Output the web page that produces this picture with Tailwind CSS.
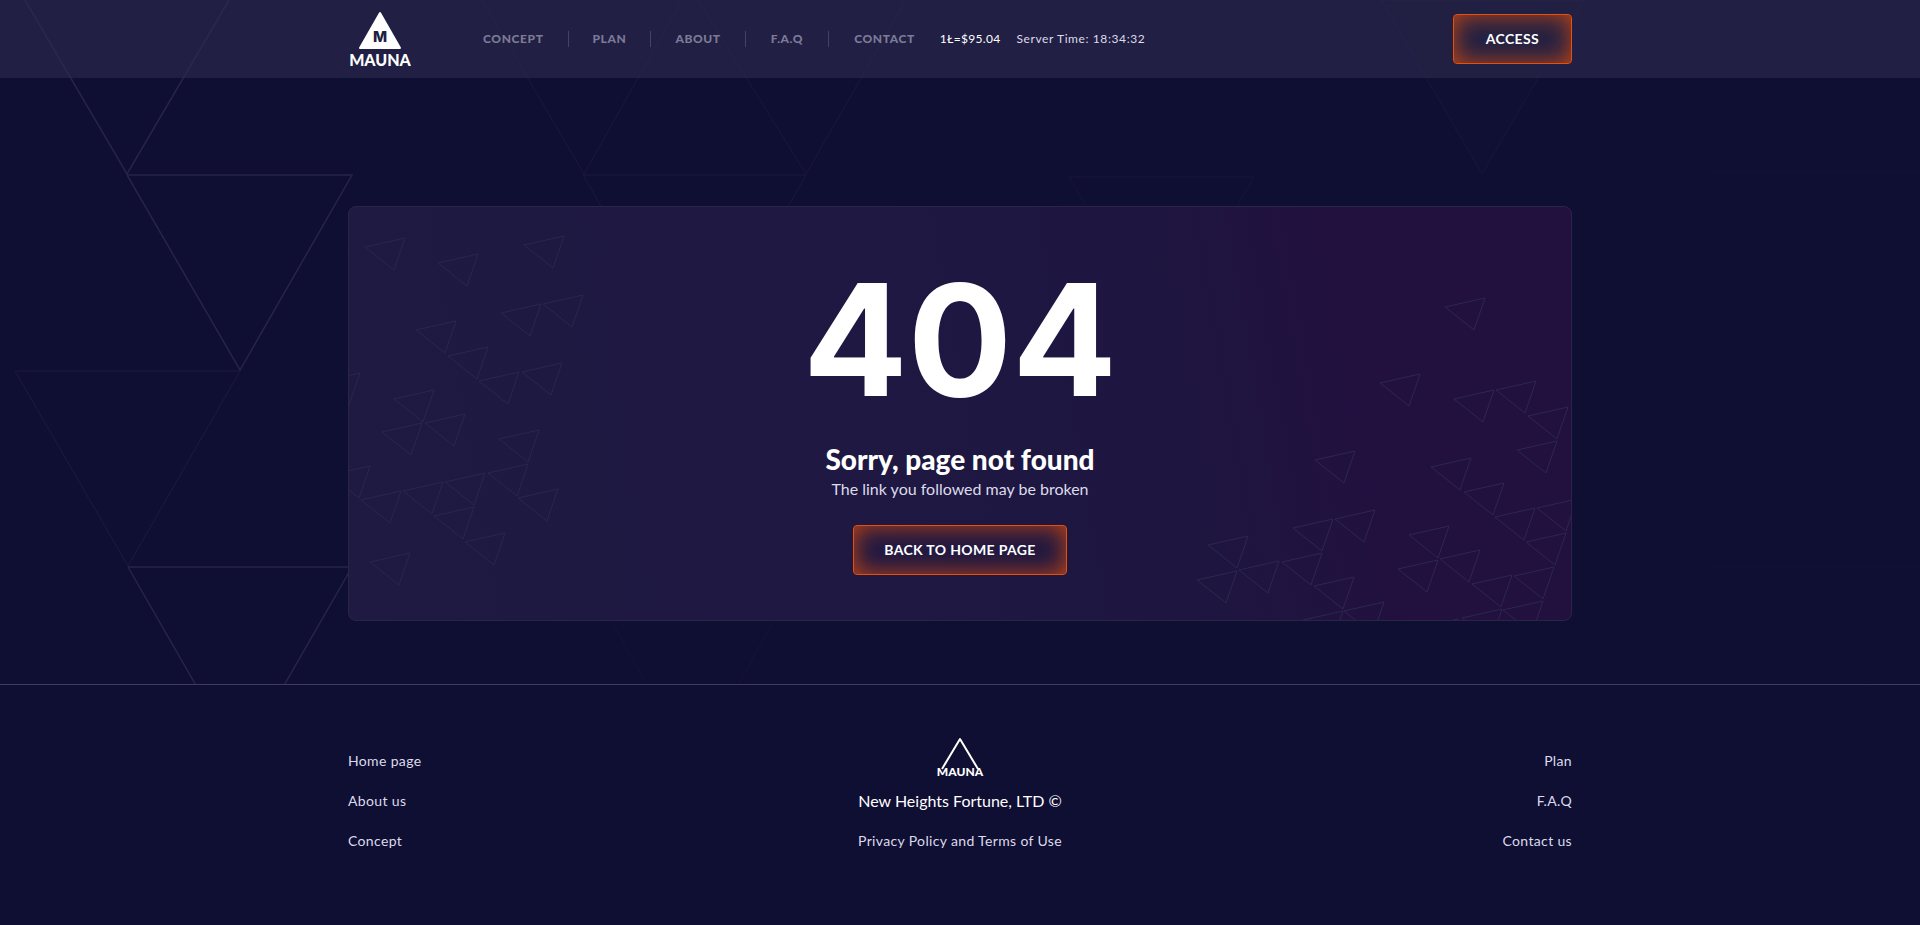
<!DOCTYPE html>
<html lang="en">
  <head>
    <meta charset="UTF-8" />
    <meta name="viewport" content="width=device-width, initial-scale=1.0" />
    <title>Mauna - 404</title>
    <script src="https://cdn.jsdelivr.net/npm/@tailwindcss/browser@4"></script>
  </head>
  <body class="min-h-screen bg-[#0f0e33] font-['Lato',sans-serif] text-white">
    <div class="relative overflow-hidden border-b border-[#3f3b5f]">
      <!-- Background triangles -->
      <svg class="pointer-events-none absolute top-0 left-0" width="1920" height="685" fill="none" aria-hidden="true">
        <path d="M25 0L127 174L229 0M127 175H352L240 370L127 175M128 567H352L240 762L128 567" stroke="#292349" stroke-width="1.5" />
        <path d="M15 371H240L128 566L15 371" stroke="#1f1a42" />
        <path d="M482 0L584 174L682 0M583 175H806L695 370L583 175M698 0L806 174L906 0" stroke="#1c183e" />
        <path d="M1086 206L1069 177H1254L1237 206" stroke="#181439" />
        <path d="M1381 0L1482 174L1584 0Z" fill="#100f34" stroke="#1a173c" />
        <path d="M612 622L647 685M773 622L738 685" stroke="#171439" />
        <path d="M1878 78L1920 151M1920 172H1710L1823 367L1920 199M1920 567H1709L1776 685M1868 685L1920 594" stroke="#131137" />
      </svg>

      <header class="relative h-[78px] bg-[#2d2b4f]/60">
        <div class="mx-auto flex h-full max-w-[1224px] items-center justify-between">
          <div class="flex items-center">
            <a href="#" class="mr-[72px]">
              <svg width="63" height="58" viewBox="0 0 63 58">
                <path d="M32 3L52 38H12Z" fill="#fff" stroke="#fff" stroke-width="2" stroke-linejoin="round" />
                <text x="32" y="32" text-anchor="middle" class="fill-[#211f44] font-['Inter',sans-serif] text-[15px] font-extrabold">M</text>
                <text x="32" y="56" text-anchor="middle" class="fill-white text-base font-black">MAUNA</text>
              </svg>
            </a>
            <nav class="flex items-center text-xs font-black tracking-wider text-[#7c7a97]">
              <a href="#" class="pr-6">CONCEPT</a>
              <a href="#" class="border-l border-[#454365] px-6">PLAN</a>
              <a href="#" class="border-l border-[#454365] px-6">ABOUT</a>
              <a href="#" class="border-l border-[#454365] px-[25px]">F.A.Q</a>
              <a href="#" class="border-l border-[#454365] px-[25px]">CONTACT</a>
            </nav>
            <span class="mr-4 text-xs tracking-wide">1Ł=$95.04</span>
            <span class="text-xs tracking-wider text-[#dcdbea]">Server Time: 18:34:32</span>
          </div>
          <button class="h-[50px] rounded border border-[#e8500a] px-8 text-sm font-bold tracking-wide shadow-[inset_0_0_25px_#e8500acc]">ACCESS</button>
        </div>
      </header>

      <!-- 404 card -->
      <main class="relative mx-auto mt-32 mb-[63px] max-w-[1224px] overflow-hidden rounded-lg border border-[#2a2548] bg-linear-[80deg,#1f1a42,#1e1842_40%,#1e1640_66%,#22103f_82%]">
        <svg class="pointer-events-none absolute -top-px -left-px" width="240" height="416" fill="none" stroke="#2c264b" aria-hidden="true">
          <path d="M17 41l40-9-11 32zM90 57l40-9-11 32zM176 39l40-9-11 32zM153 107l40-9-11 32zM195 98l40-9-11 32zM68 124l40-9-11 32zM100 150l40-9-11 32zM131 175l40-9-11 32z" />
          <path d="M174 166l40-9-11 32zM-28 176l40-9-11 32zM46 193l40-9-11 32zM34 226l40-9-11 32zM77 217l40-9-11 32zM151 233l40-9-11 32zM140 267l40-9-11 32zM-18 269l40-9-11 32z" />
          <path d="M13 294l40-9-11 32zM55 285l40-9-11 32zM97 276l40-9-11 32zM86 310l40-9-11 32zM117 336l40-9-11 32zM170 292l40-9-11 32zM22 356l40-9-11 32z" />
        </svg>
        <svg class="pointer-events-none absolute top-0 left-1/2 -translate-x-1/2" width="536" height="416" fill="none" aria-hidden="true">
          <path d="M1 165H225L114 359Z" stroke="#1d1b43" />
        </svg>
        <svg class="pointer-events-none absolute -top-px -right-px" width="402" height="416" fill="none" stroke="#2c284e" aria-hidden="true">
          <path d="M275 101l40-9-11 32zM210 177l40-9-11 32zM284 193l40-9-11 32zM326 184l40-9-11 32zM358 210l40-9-11 32zM347 244l40-9-11 32zM145 254l40-9-11 32zM261 261l40-9-11 32z" />
          <path d="M294 286l40-9-11 32zM325 311l40-9-11 32zM367 302l40-9-11 32zM356 336l40-9-11 32zM123 322l40-9-11 32zM165 313l40-9-11 32zM38 339l40-9-11 32zM27 374l40-9-11 32z" />
          <path d="M69 364l40-9-11 32zM112 356l40-9-11 32zM144 380l40-9-11 32zM133 414l40-9-11 32zM174 405l40-9-11 32zM239 329l40-9-11 32zM228 363l40-9-11 32zM270 353l40-9-11 32z" />
          <path d="M302 378l40-9-11 32zM344 370l40-9-11 32zM292 412l40-9-11 32zM333 404l40-9-11 32zM248 422l40-9-11 32z" />
        </svg>
        <div class="relative flex flex-col items-center pt-8 pb-[45px]">
          <h1 class="font-['Inter',sans-serif] text-[155px] leading-[202px] font-bold">404</h1>
          <p class="text-[28px] leading-9 font-black">Sorry, page not found</p>
          <p class="text-base text-[#dcdbea]">The link you followed may be broken</p>
          <button class="mt-6 h-[50px] rounded border border-[#e8500a] px-[30px] text-sm font-bold tracking-wide shadow-[inset_0_0_25px_#e8500acc]">BACK TO HOME PAGE</button>
        </div>
      </main>
    </div>

    <!-- Footer -->
    <footer class="mx-auto grid max-w-[1224px] grid-cols-3 pt-[52px] pb-16 text-sm tracking-wide text-[#dcdbea]">
      <div class="flex flex-col items-start gap-5 pt-3.5">
        <a href="#">Home page</a>
        <a href="#">About us</a>
        <a href="#">Concept</a>
      </div>
      <div class="flex flex-col items-center">
        <a href="#">
          <svg width="48" height="42" viewBox="0 0 48 42">
            <path d="M6 32L24 2L42 32" fill="none" stroke="#fff" stroke-width="2" stroke-linejoin="round" />
            <text x="24" y="39" text-anchor="middle" class="fill-white text-xs leading-none font-black tracking-normal">MAUNA</text>
          </svg>
        </a>
        <p class="mt-3 text-base leading-5 tracking-normal text-white">New Heights Fortune, LTD ©</p>
        <a href="#" class="mt-5">Privacy Policy and Terms of Use</a>
      </div>
      <div class="flex flex-col items-end gap-5 pt-3.5">
        <a href="#">Plan</a>
        <a href="#">F.A.Q</a>
        <a href="#">Contact us</a>
      </div>
    </footer>
  </body>
</html>
